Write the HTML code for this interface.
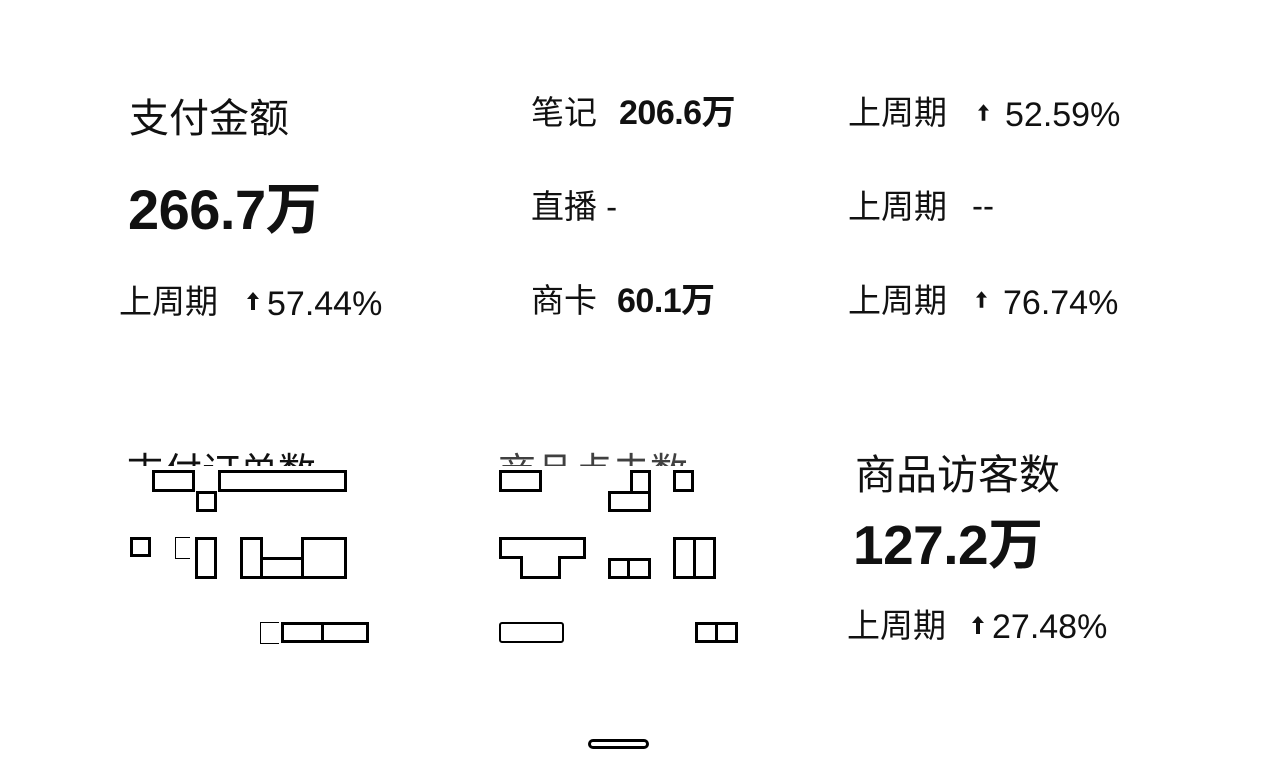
<!DOCTYPE html>
<html><head><meta charset="utf-8"><style>
html,body{margin:0;padding:0;background:#fff;width:1279px;height:780px;overflow:hidden;position:relative}
.t{position:absolute;white-space:nowrap;line-height:1;color:#111;font-family:"Liberation Sans","Noto Sans CJK SC",sans-serif}
.b{font-weight:bold;letter-spacing:-0.5px}
.bx{position:absolute;border:3px solid #000;box-sizing:border-box;background:#fff}
.ar{position:absolute}
</style></head><body>
<div class="t" style="left:129px;top:99px;font-size:40px">支付金额</div>
<div class="t b" style="left:128px;top:182px;font-size:56px">266.7万</div>
<div class="t" style="left:119px;top:285px;font-size:33px">上周期</div>
<svg class="ar" style="left:247px;top:292px" width="12" height="18" viewBox="0 0 12 18"><path d="M6 0L12 7H8V18H4V7H0Z" fill="#111"/></svg>
<div class="t" style="left:267px;top:287px;font-size:34px">57.44%</div>

<div class="t" style="left:531px;top:96px;font-size:33px">笔记</div>
<div class="t b" style="left:619px;top:96px;font-size:34px">206.6万</div>
<div class="t" style="left:531px;top:190px;font-size:33px">直播 -</div>
<div class="t" style="left:531px;top:284px;font-size:33px">商卡</div>
<div class="t b" style="left:617px;top:284px;font-size:34px">60.1万</div>

<div class="t" style="left:848px;top:96px;font-size:33px">上周期</div>
<svg class="ar" style="left:978px;top:104px" width="11" height="17" viewBox="0 0 12 18"><path d="M6 0L12 7H8V18H4V7H0Z" fill="#111"/></svg>
<div class="t" style="left:1005px;top:98px;font-size:34px">52.59%</div>
<div class="t" style="left:848px;top:190px;font-size:33px">上周期</div>
<div class="t" style="left:972px;top:189px;font-size:33px">--</div>
<div class="t" style="left:848px;top:284px;font-size:33px">上周期</div>
<svg class="ar" style="left:976px;top:291px" width="11" height="17" viewBox="0 0 12 18"><path d="M6 0L12 7H8V18H4V7H0Z" fill="#111"/></svg>
<div class="t" style="left:1003px;top:286px;font-size:34px">76.74%</div>

<div style="position:absolute;left:126px;top:452px;width:600px;height:14px;overflow:hidden">
<div class="t" style="left:0;top:2px;font-size:38px">支付订单数</div>
<div class="t" style="left:372px;top:2px;font-size:38px;opacity:.8">商品点击数</div>
</div>
<div class="bx" style="left:152px;top:470px;width:43px;height:22px"></div>
<div class="bx" style="left:196px;top:491px;width:21px;height:21px"></div>
<div class="bx" style="left:218px;top:470px;width:129px;height:22px"></div>
<div class="bx" style="left:130px;top:537px;width:21px;height:20px"></div>
<div style="position:absolute;left:175px;top:537px;width:14px;height:20px;border:1px solid #000;border-right:none"></div>
<div class="bx" style="left:195px;top:537px;width:22px;height:42px"></div>
<div class="bx" style="left:240px;top:537px;width:23px;height:42px"></div>
<div class="bx" style="left:260px;top:557px;width:44px;height:22px"></div>
<div class="bx" style="left:301px;top:537px;width:46px;height:42px"></div>
<div style="position:absolute;left:260px;top:622px;width:18px;height:20px;border:1px solid #000;border-right:none"></div>
<div class="bx" style="left:281px;top:622px;width:43px;height:21px"></div>
<div class="bx" style="left:321px;top:622px;width:48px;height:21px"></div>

<div class="bx" style="left:499px;top:470px;width:43px;height:22px"></div>
<div class="bx" style="left:630px;top:470px;width:21px;height:42px"></div>
<div class="bx" style="left:608px;top:491px;width:43px;height:21px"></div>
<div class="bx" style="left:673px;top:470px;width:21px;height:22px"></div>
<div class="bx" style="left:499px;top:537px;width:87px;height:22px"></div>
<div class="bx" style="left:520px;top:556px;width:41px;height:23px;border-top:none"></div>
<div class="bx" style="left:608px;top:558px;width:22px;height:21px"></div>
<div class="bx" style="left:627px;top:558px;width:24px;height:21px"></div>
<div class="bx" style="left:673px;top:537px;width:23px;height:42px"></div>
<div class="bx" style="left:693px;top:537px;width:23px;height:42px"></div>
<div class="bx" style="left:499px;top:622px;width:65px;height:21px;border-width:2px;border-radius:3px"></div>
<div class="bx" style="left:695px;top:622px;width:23px;height:21px"></div>
<div class="bx" style="left:715px;top:622px;width:23px;height:21px"></div>

<div class="t" style="left:855px;top:455px;font-size:41px">商品访客数</div>
<div class="t b" style="left:853px;top:518px;font-size:55px">127.2万</div>
<div class="t" style="left:847px;top:609px;font-size:33px">上周期</div>
<svg class="ar" style="left:972px;top:616px" width="12" height="18" viewBox="0 0 12 18"><path d="M6 0L12 7H8V18H4V7H0Z" fill="#111"/></svg>
<div class="t" style="left:992px;top:610px;font-size:34px">27.48%</div>

<div style="position:absolute;left:588px;top:739px;width:61px;height:10px;border:3px solid #000;border-radius:6px;box-sizing:border-box"></div>
</body></html>
